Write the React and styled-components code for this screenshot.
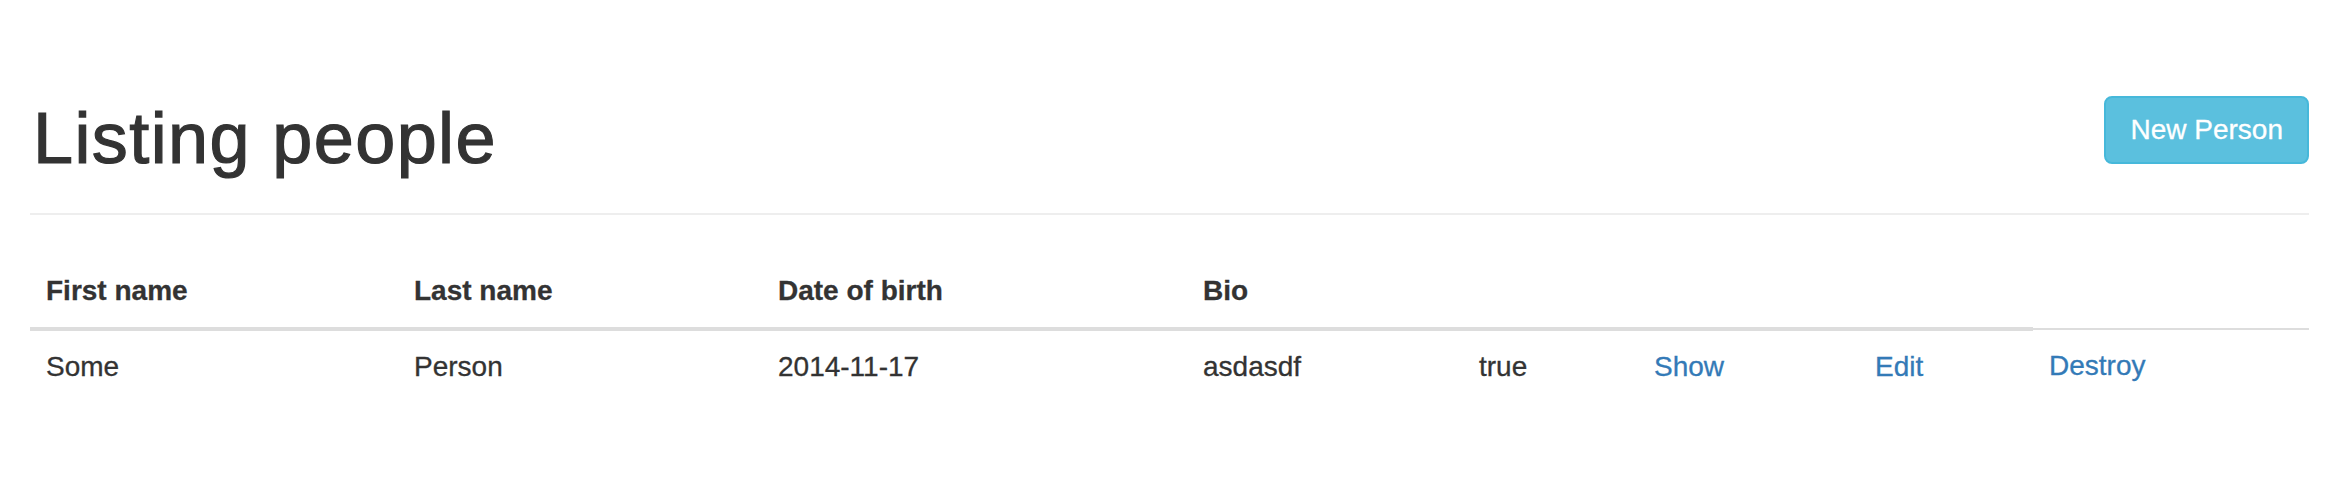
import React from 'react'
import styled, { createGlobalStyle } from 'styled-components'

const GlobalStyle = createGlobalStyle`
  html, body {
    margin: 0;
    padding: 0;
    background: #fff;
  }
  body {
    font-family: "Liberation Sans", Arial, Helvetica, sans-serif;
    font-size: 28px;
    line-height: 40px;
    color: #333;
    -webkit-text-stroke: 0.3px currentColor;
  }
`

const people = [
  { first: 'Some', last: 'Person', born: '2014-11-17', bio: 'asdasdf', flag: 'true' },
]

const widths = [368, 364, 425, 276, 175, 221, 174, 276]

const Page = () => {
  return (
    <Wrapper>
      <Header>
        <Title>Listing people</Title>
        <NewButton href="#">New Person</NewButton>
      </Header>
      <Table>
        <colgroup>
          {widths.map((w, i) => <Col key={i} $w={w} />)}
        </colgroup>
        <thead>
          <tr>
            <Th>First name</Th>
            <Th>Last name</Th>
            <Th>Date of birth</Th>
            <Th>Bio</Th>
            <Th colSpan={3}></Th>
          </tr>
        </thead>
        <tbody>
          {people.map((p, i) => (
            <tr key={i}>
              <Td>{p.first}</Td>
              <Td>{p.last}</Td>
              <Td>{p.born}</Td>
              <Td>{p.bio}</Td>
              <Td>{p.flag}</Td>
              <Td><Link href="#">Show</Link></Td>
              <Td><Link href="#">Edit</Link></Td>
              <Td><Link href="#">Destroy</Link></Td>
            </tr>
          ))}
        </tbody>
      </Table>
    </Wrapper>
  )
}

const Wrapper = styled.div`
  padding: 0 43px 0 30px;
`

const Header = styled.div`
  display: flex;
  justify-content: space-between;
  align-items: flex-start;
  padding-top: 96px;
  padding-bottom: 18px;
  border-bottom: 2px solid #eee;
  margin-bottom: 40px;
`

const Title = styled.h1`
  margin: 4px 0 19px 3px;
  font-size: 72px;
  line-height: 76px;
  font-weight: 500;
  letter-spacing: 1.4px;
  color: #333;
  -webkit-text-stroke: 1.2px #333;
`

const NewButton = styled.a`
  display: inline-block;
  padding: 12px 24px;
  font-size: 28px;
  line-height: 40px;
  color: #fff;
  text-decoration: none;
  background-color: #5bc0de;
  border: 2px solid #46b8da;
  border-radius: 8px;
  white-space: nowrap;
`

const Table = styled.table`
  width: 100%;
  table-layout: fixed;
  border-collapse: collapse;
  border-spacing: 0;
`

const Col = styled.col`
  width: ${({ $w }) => $w}px;
`

const Th = styled.th`
  padding: 16px;
  text-align: left;
  font-weight: bold;
  vertical-align: bottom;
  border-bottom: 4px solid #ddd;
`

const Td = styled.td`
  padding: 16px;
  vertical-align: top;
  border-top: 2px solid #ddd;
  white-space: nowrap;
`

const Link = styled.a`
  color: #337ab7;
  text-decoration: none;
`

export default function App() {
  return (
    <>
      <GlobalStyle />
      <Page />
    </>
  )
}
